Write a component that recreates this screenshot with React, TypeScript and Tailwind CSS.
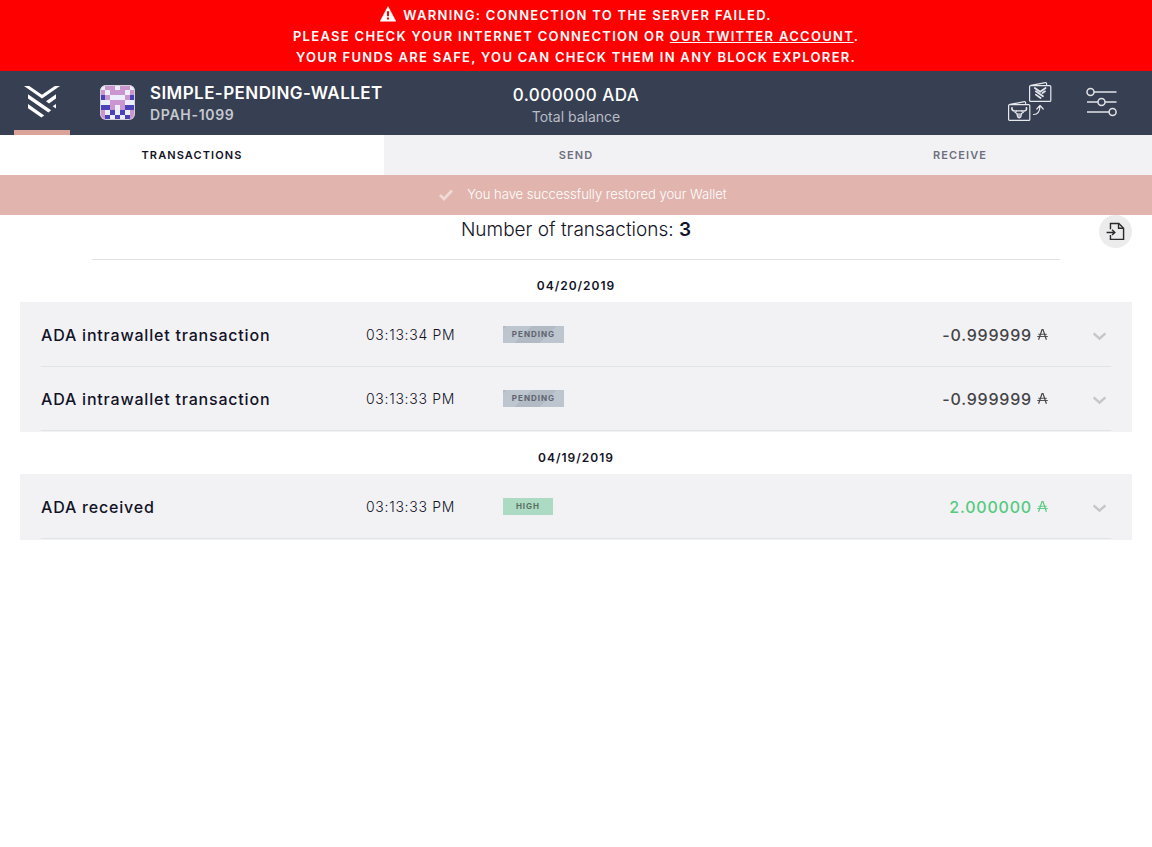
const AVATAR_ROWS = ['wppwppw', 'pwpppwp', 'bpwwwpb', 'wwpppww', 'bbpwpbb', 'pwbwbwp', 'pbwbwbp'];
const AVATAR_COLORS: Record<string, string> = { w: '#edeefb', p: '#cb95cf', b: '#4a42b6' };

type Transaction = {
  title: string;
  time: string;
  status: 'PENDING' | 'HIGH';
  amount: string;
  incoming?: boolean;
};

const GROUPS: { date: string; items: Transaction[] }[] = [
  {
    date: '04/20/2019',
    items: [
      { title: 'ADA intrawallet transaction', time: '03:13:34 PM', status: 'PENDING', amount: '-0.999999' },
      { title: 'ADA intrawallet transaction', time: '03:13:33 PM', status: 'PENDING', amount: '-0.999999' },
    ],
  },
  {
    date: '04/19/2019',
    items: [{ title: 'ADA received', time: '03:13:33 PM', status: 'HIGH', amount: '2.000000', incoming: true }],
  },
];

function WarningIcon() {
  return (
    <svg className="mr-[7px] inline-block h-4 w-4 align-[-2px]" viewBox="0 0 16 16" aria-hidden="true">
      <path d="M8 .6 15.8 15.2H.2Z" fill="#fff" stroke="#fff" strokeWidth=".5" strokeLinejoin="round" />
      <path d="M7 5.2h2v5H7zM7 11.4h2v2H7z" fill="red" />
    </svg>
  );
}

function Logo() {
  return (
    <svg className="shrink-0" width="36" height="34" viewBox="0 0 36 34" aria-hidden="true">
      <g fill="#fff">
        <path d="M0 1h5.200L18 9.800 30.800 1H36L18 13.400Z" />
        <path d="M4 9.200 27.200 25.200 24.400 27.400 4 13.400Z" />
        <path d="M4 19 20.200 30.400 17.400 32.600 4 23.200Z" />
        <path d="M32 9.200v4.200L25 18.400 22 16.300Z" />
        <path d="M32 19v4.600L28.600 21.300Z" />
      </g>
    </svg>
  );
}

function Avatar() {
  return (
    <svg className="mb-0.5 shrink-0 rounded-md" width="35" height="35" viewBox="0 0 35 35" aria-hidden="true">
      {AVATAR_ROWS.map((row, y) =>
        row.split('').map((c, x) => (
          <rect key={`${x}-${y}`} x={x * 5} y={y * 5} width="5" height="5" fill={AVATAR_COLORS[c]} shapeRendering="crispEdges" />
        )),
      )}
      <rect x=".5" y=".5" width="34" height="34" rx="5.500" fill="none" stroke="#d3cfdb" />
    </svg>
  );
}

function WalletsIcon() {
  return (
    <svg width="44" height="40" viewBox="0 0 44 40" fill="none" stroke="#e6e8ec" strokeWidth="1.200" strokeLinecap="round" strokeLinejoin="round" aria-hidden="true">
      <rect x="21.600" y="3.600" width="21.200" height="15.800" rx="1" />
      <path d="M23 3.400 37.500.7q1-.1 1.100 1v1.700" />
      <rect x=".6" y="22.600" width="21.200" height="15.800" rx="1" />
      <path d="M2 22.400 16.500 19.700q1-.1 1.100 1v1.700" />
      <path d="m26.800 6 5.400 3.800L37.600 6M27.800 9.300l7.200 5M27.800 12.600l4.800 3.400M37 9.300l-2.600 1.800" strokeWidth="1.700" />
      <path d="M4 25.800q-.6 2.600 2 3.200h2.500M18.400 25.800q.6 2.600-2 3.200h-2.500" strokeWidth="1.600" />
      <path d="M8.500 28.800h5.400M7 30.300l2.200 1.500M15.400 30.300l-2.200 1.500M8.800 31.500l.9 3.600 1.500.9 1.500-.9.900-3.600" strokeWidth="1.200" />
      <path d="M10 31.800h2.400v2.600H10Z" strokeWidth=".6" fill="#e6e8ec" fillOpacity=".6" />
      <path d="M25.500 32.500q6 .2 6.500-8M28.800 27l3.200-3.600 3.200 3.600" />
    </svg>
  );
}

function SettingsIcon() {
  return (
    <svg width="32" height="30" viewBox="0 0 32 30" fill="none" stroke="#e1e3e7" strokeWidth="1.500" aria-hidden="true">
      <path d="M8 5h22.500M1 15h11M19 15h11.500M1 25h22" />
      <circle cx="4.500" cy="5" r="3.500" />
      <circle cx="15.500" cy="15" r="3.500" />
      <circle cx="26.600" cy="25" r="3.500" />
    </svg>
  );
}

function ExportIcon() {
  return (
    <svg width="19" height="19" viewBox="0 0 20 20" fill="none" stroke="#2b2b2f" strokeWidth="1.500" aria-hidden="true">
      <path d="M4.700 7.500V1.500h8.800L18.500 6.500v11.800H4.700v-4.600" />
      <path d="M13.200 1.800v4.800H18" />
      <path d="M.6 11h8.400M6.400 8.200l2.900 2.800-2.900 2.800" />
    </svg>
  );
}

function AdaSymbol() {
  return (
    <svg className="mb-0.5 ml-[5px] h-[11px] w-[11px]" viewBox="0 0 11 11" fill="none" stroke="currentColor" aria-label="ADA" role="img">
      <path d="M1.600 10.800 5 .6h1L9.400 10.800" strokeWidth="1.200" />
      <path d="M1.200 5.300h8.600M.2 7.500h10.600" strokeWidth=".9" />
    </svg>
  );
}

function Row({ tx }: { tx: Transaction }) {
  return (
    <li className="flex h-16 items-center border-b border-[#dfe4e8]">
      <div className="w-[325px] pt-px text-base font-medium tracking-wider text-[#121327]">{tx.title}</div>
      <time className="w-[137px] text-sm font-light tracking-wider text-[#121327]">{tx.time}</time>
      {tx.status === 'PENDING' ? (
        <span className="h-[17px] w-[61px] bg-[linear-gradient(135deg,#b2bbc3_0_5%,#bdc5cf_5%_37%,#b2bbc3_37%_69%,#bdc5cf_69%)] text-center text-[8px] leading-[17px] font-bold tracking-[1px] text-[#5e6370]">
          PENDING
        </span>
      ) : (
        <span className="h-[17px] w-[50px] bg-[#addac2] text-center text-[8px] leading-[17px] font-bold tracking-[1px] text-[#587062]">
          HIGH
        </span>
      )}
      <div className={`ml-auto flex items-center pt-px text-base font-medium tracking-wider ${tx.incoming ? 'text-[#54ca7f]' : 'text-[#444446]'}`}>
        {tx.amount}
        <AdaSymbol />
      </div>
      <button type="button" aria-label="Show transaction details" className="mr-1 ml-11 flex h-5 w-[15px] items-center justify-center pt-1">
        <svg width="15" height="9" viewBox="0 0 15 9" fill="none" stroke="#c6c6c9" strokeWidth="2.400" aria-hidden="true">
          <path d="m1.600 1.300 5.900 5.400 5.900-5.400" />
        </svg>
      </button>
    </li>
  );
}

export default function App() {
  return (
    <div className="min-h-screen bg-white font-['Inter',sans-serif] text-[#121327]">
      <div role="alert" className="bg-[#ff0000] pt-[5px] pb-[3px] text-center text-[13px] leading-[21px] font-semibold tracking-widest text-white">
        <p>
          <WarningIcon />
          WARNING: CONNECTION TO THE SERVER FAILED.
        </p>
        <p>
          PLEASE CHECK YOUR INTERNET CONNECTION OR{' '}
          <a href="#twitter" className="underline">OUR TWITTER ACCOUNT</a>.
        </p>
        <p>YOUR FUNDS ARE SAFE, YOU CAN CHECK THEM IN ANY BLOCK EXPLORER.</p>
      </div>

      <header className="grid h-16 grid-cols-3 bg-[#373f52] text-white">
        <div className="flex items-center">
          <button type="button" aria-label="Wallets" className="mr-[30px] ml-3.5 flex h-full w-14 shrink-0 items-center justify-center border-b-[5px] border-[#daa49a] pt-0.5">
            <Logo />
          </button>
          <Avatar />
          <div className="ml-[15px] whitespace-nowrap">
            <h1 className="text-[17px] leading-6 font-semibold tracking-wide">SIMPLE-PENDING-WALLET</h1>
            <p className="text-sm leading-5 font-semibold tracking-wider text-[#c6c9d0]">DPAH-1099</p>
          </div>
        </div>
        <div className="flex flex-col items-center justify-center pt-1">
          <p className="text-[17px] leading-6 font-medium tracking-wide">0.000000 ADA</p>
          <p className="text-sm leading-5 text-[#b9bdc5]">Total balance</p>
        </div>
        <div className="flex items-center justify-end pr-[34px] pb-0.5">
          <button type="button" aria-label="Daedalus transfer" className="mr-[34px]">
            <WalletsIcon />
          </button>
          <button type="button" aria-label="Settings">
            <SettingsIcon />
          </button>
        </div>
      </header>

      <nav className="grid h-10 grid-cols-3 bg-[#f2f2f5] text-[11px] font-semibold text-[#6e6f7c]">
        <button type="button" className="bg-white tracking-widest text-[#121327]">TRANSACTIONS</button>
        <button type="button" className="tracking-widest">SEND</button>
        <button type="button" className="tracking-widest">RECEIVE</button>
      </nav>

      <div role="status" className="flex h-10 items-center justify-center gap-3.5 bg-[#e1b5ae] pl-3.5 text-[13px] font-light text-white">
        <svg width="14" height="12" viewBox="0 0 14 12" fill="none" stroke="#f0dad6" strokeWidth="2.800" aria-hidden="true">
          <path d="m1 6 4 4L13 1.500" />
        </svg>
        You have successfully restored your Wallet
      </div>

      <main className="px-5">
        <div className="relative mx-[72px] h-[45px] border-b border-[#dfe1e3] text-center">
          <h2 className="pt-px text-[19px] leading-7 font-light">
            Number of transactions: <span className="font-semibold">3</span>
          </h2>
          <button type="button" aria-label="Export transactions" className="absolute top-0 -right-[72px] flex h-[33px] w-[33px] items-center justify-center rounded-full bg-[#ececec]">
            <ExportIcon />
          </button>
        </div>
        {GROUPS.map((group) => (
          <section key={group.date}>
            <h3 className="flex h-[42px] items-center justify-center pt-2.5 text-xs font-semibold tracking-[1px]">{group.date}</h3>
            <ul className="border border-[#f2f2f5] bg-[#f2f2f5] px-5">
              {group.items.map((tx) => (
                <Row key={tx.time} tx={tx} />
              ))}
            </ul>
          </section>
        ))}
      </main>
    </div>
  );
}
